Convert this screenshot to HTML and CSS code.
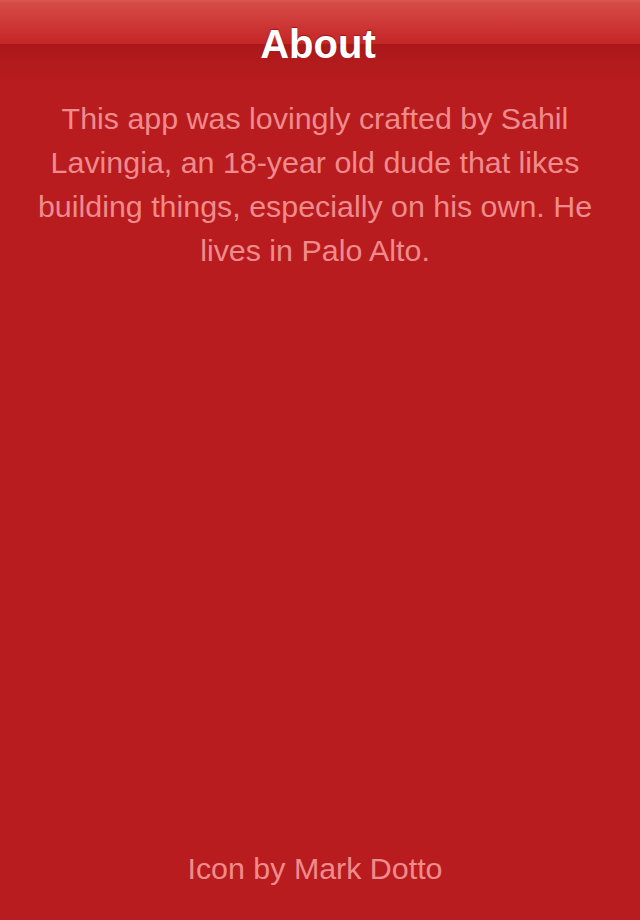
FILE: index.html
```html
<!DOCTYPE html>
<html>
<head>
<meta charset="utf-8">
<link rel="stylesheet" href="styles.css">
</head>
<body>
<div class="screen">
  <header class="navbar"><h1 class="title">About</h1></header>
  <p class="about">This app was lovingly crafted by Sahil Lavingia, an 18-year old dude that likes building things, especially on his own. He lives in Palo Alto.</p>
  <p class="credit">Icon by Mark Dotto</p>
</div>
</body>
</html>
```
FILE: styles.css
```css
html, body {
  margin: 0;
  padding: 0;
  background: #b81c1e;
}
.screen {
  width: 640px;
  height: 920px;
  display: flex;
  flex-direction: column;
  font-family: "Liberation Sans", Arial, sans-serif;
  background: #b81c1e;
}
.navbar {
  height: 88px;
  flex: none;
  background: linear-gradient(to bottom, #dc5852 0px, #d64b47 3px, #c52526 44px, #ab1819 44px, #b41b1d 66px, #b81c1e 88px);
}
.title {
  margin: 0;
  padding-right: 4px;
  text-align: center;
  color: #ffffff;
  font-size: 40px;
  font-weight: bold;
  line-height: 88px;
  text-shadow: 0 -1px 1px rgba(100, 0, 0, 0.5);
}
.about {
  margin: 8px 0 0;
  padding: 0 30px 0 20px;
  text-align: center;
  color: #f08b8d;
  font-size: 30.4px;
  line-height: 44px;
}
.credit {
  margin: auto 0 30px;
  padding: 0 30px 0 20px;
  text-align: center;
  color: #f08b8d;
  font-size: 30.4px;
  line-height: 44px;
}
```
